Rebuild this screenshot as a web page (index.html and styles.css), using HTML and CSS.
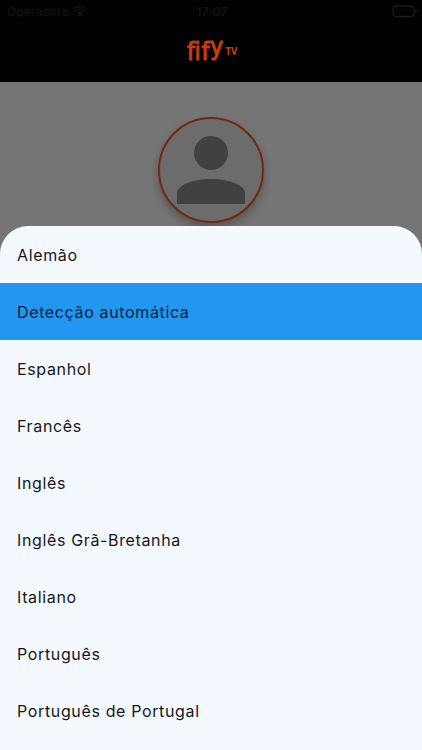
FILE: index.html
```html
<!DOCTYPE html>
<html lang="pt">
<head>
<meta charset="UTF-8">
<meta name="viewport" content="width=device-width, initial-scale=1.0">
<title>Fify TV</title>
<link rel="stylesheet" href="styles.css">
</head>
<body>

<div class="screen">
<header class="header">
<div class="status">
<div class="carrier">
<span>Operadora</span>
<svg class="wifi" width="16" height="12" viewBox="0 0 16 12">
<path d="M1 4.2C5 .4 11 .4 15 4.2M3.4 6.7c2.6-2.4 6.6-2.4 9.2 0M5.8 9c1.2-1.1 3.2-1.1 4.4 0L8 11z"/>
</svg>
</div>
<span class="clock">17:07</span>
<svg class="battery" width="25" height="13" viewBox="0 0 25 13">
<rect x="1" y="1" width="21" height="10.5" rx="3"/>
<path d="M24 4.5v3.5"/>
</svg>
</div>
<svg class="logo" width="52" height="24" viewBox="0 0 52 24">
<text class="logo-name" transform="scale(1 1.12)" x="2 9.5 16.5 25" y="18 18 18 13.5">fify</text>
<text class="logo-tv" x="40.5" y="15" textLength="12" lengthAdjust="spacingAndGlyphs">TV</text>
</svg>
</header>

<main class="profile">
<div class="avatar">
<svg width="68" height="68" viewBox="0 0 68 68">
<circle cx="34" cy="17" r="17"/>
<path d="M0 68V57C0 49 17 43 34 43s34 6 34 14v11z"/>
</svg>
</div>
</main>

<ul class="sheet">
<li>Alemão</li>
<li class="selected">Detecção automática</li>
<li>Espanhol</li>
<li>Francês</li>
<li>Inglês</li>
<li>Inglês Grã-Bretanha</li>
<li>Italiano</li>
<li>Português</li>
<li>Português de Portugal</li>
</ul>
</div>

</body>
</html>
```
FILE: styles.css
```css
body {
margin: 0;
font-family: Inter, sans-serif;
background: #757575;
}
.screen {
display: flex;
flex-direction: column;
height: 750px;
overflow: hidden;
}
.header {
display: flex;
flex-direction: column;
align-items: center;
height: 82px;
flex-shrink: 0;
background: #000;
}
.status {
display: grid;
grid-template-columns: 1fr auto 1fr;
align-items: center;
box-sizing: border-box;
width: 100%;
height: 22px;
padding: 0 5px 0 7px;
font-size: 12px;
color: #0e190e;
}
.carrier {
display: flex;
align-items: center;
gap: 4px;
letter-spacing: 0.1px;
}
.clock {
font-weight: 600;
letter-spacing: 0.2px;
}
.wifi,
.battery {
fill: none;
stroke: #0e190e;
stroke-width: 1.3;
}
.battery {
justify-self: end;
stroke: #142114;
}
.logo {
margin-top: 18px;
overflow: visible;
fill: #c43e0b;
}
.logo-name {
font-family: "DejaVu Sans", sans-serif;
font-size: 22.5px;
font-variant-ligatures: none;
stroke: #c43e0b;
stroke-width: 1;
stroke-linejoin: round;
}
.logo-tv {
font-family: "DejaVu Sans", sans-serif;
font-size: 11px;
font-weight: bold;
}
.profile {
display: flex;
justify-content: center;
height: 144px;
flex-shrink: 0;
}
.avatar {
display: flex;
justify-content: center;
box-sizing: border-box;
width: 106px;
height: 106px;
margin-top: 35px;
padding-top: 17px;
border: 2px solid #712b0b;
border-radius: 50%;
background: #6c6c6c;
box-shadow: 0 5px 10px rgba(0, 0, 0, 0.28);
fill: #414141;
}
.sheet {
position: relative;
flex: 1;
margin: 0;
padding: 0;
overflow: hidden;
list-style: none;
border-radius: 28px 28px 0 0;
background: #f4f9ff;
}
.sheet li {
height: 57px;
padding-left: 17px;
line-height: 58px;
font-size: 16px;
letter-spacing: 0.64px;
color: #14171a;
}
.sheet .selected {
background: #2196f3;
color: #071c30;
}
```
